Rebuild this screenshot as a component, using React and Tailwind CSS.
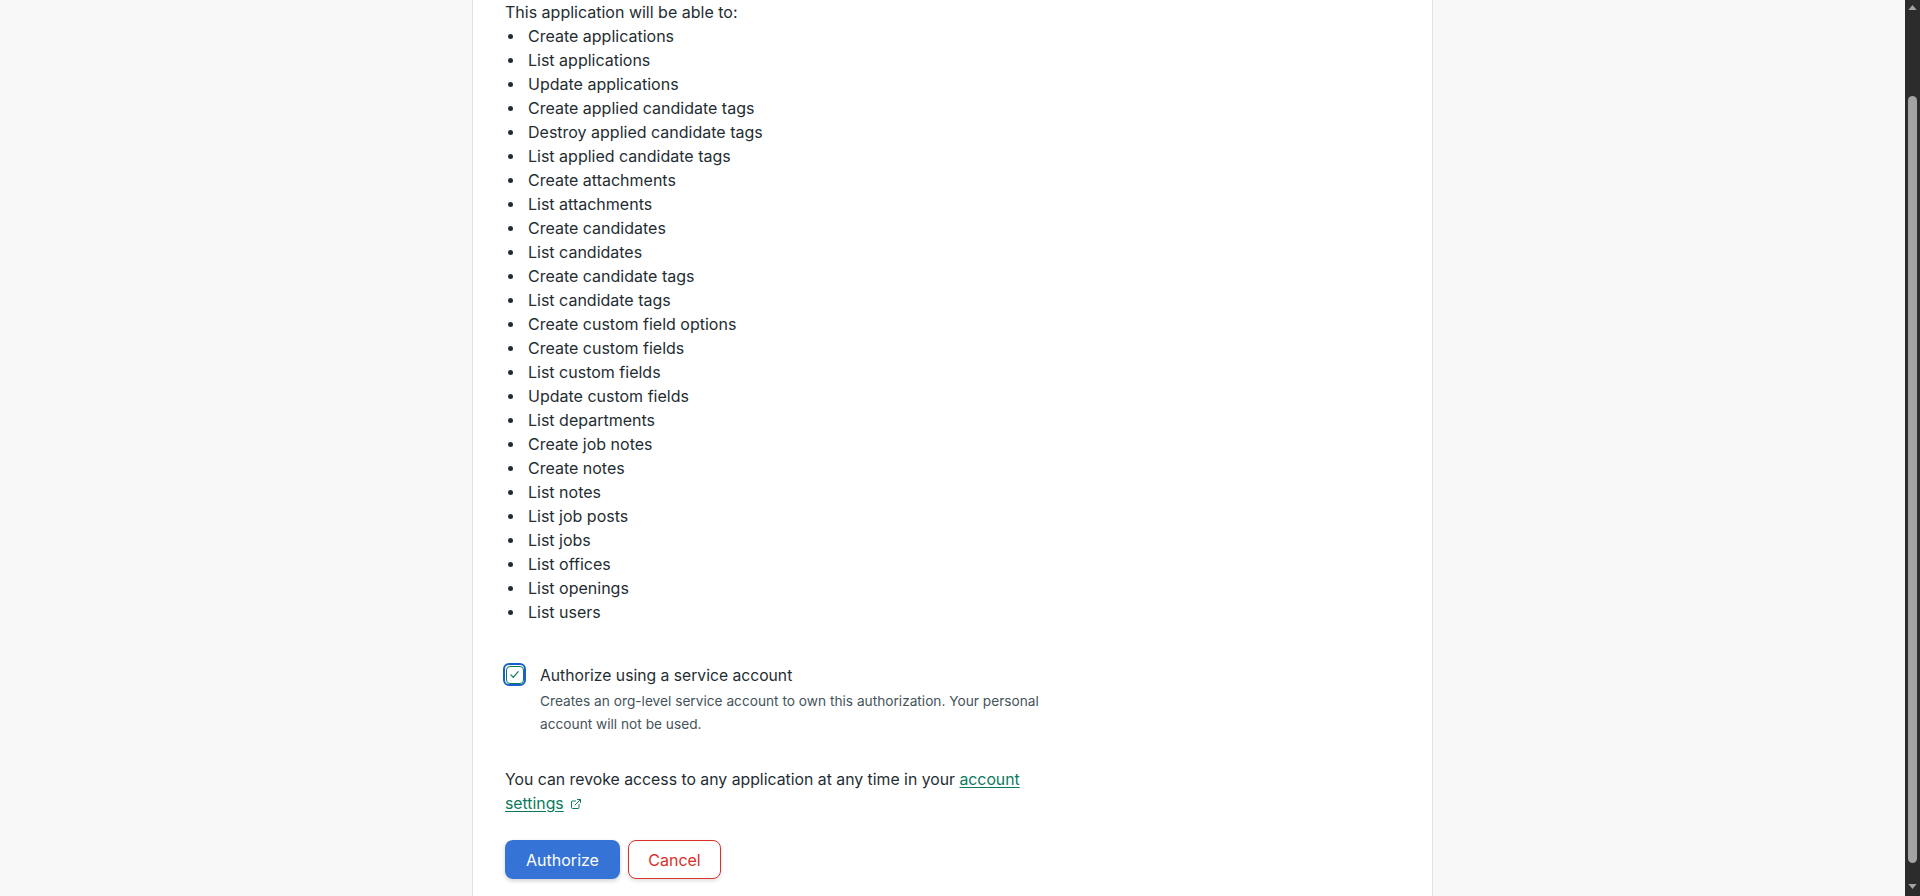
import { ExternalLink } from "lucide-react"

const scopes = [
	"Create applications",
	"List applications",
	"Update applications",
	"Create applied candidate tags",
	"Destroy applied candidate tags",
	"List applied candidate tags",
	"Create attachments",
	"List attachments",
	"Create candidates",
	"List candidates",
	"Create candidate tags",
	"List candidate tags",
	"Create custom field options",
	"Create custom fields",
	"List custom fields",
	"Update custom fields",
	"List departments",
	"Create job notes",
	"Create notes",
	"List notes",
	"List job posts",
	"List jobs",
	"List offices",
	"List openings",
	"List users",
]

const CheckBox = () => (
	<span className="flex items-center justify-center w-[23px] h-[23px] rounded-[6px] border-2 border-[#1a5fd0] shrink-0">
		<span className="flex items-center justify-center w-[18px] h-[18px] rounded-[4px] border border-[#0e7a5a] bg-white">
			<svg viewBox="0 0 16 16" className="w-[13px] h-[13px]" fill="none" stroke="#0e7a5a" strokeWidth="1.5" strokeLinecap="round" strokeLinejoin="round">
				<path d="M3.5 8.5l3 3 6-7" />
			</svg>
		</span>
	</span>
)

// the window scrollbar as it shows in the shot
const ScrollBar = () => (
	<div className="w-[15px] h-full bg-[#2c2c2c] flex flex-col items-center shrink-0">
		<svg viewBox="0 0 10 6" className="w-[9px] h-[5px] mt-[5px]" fill="#a3a3a3">
			<path d="M0 6L5 0l5 6z" />
		</svg>
		<div className="w-[9px] mt-[86px] h-[767px] rounded-full bg-[#a3a3a3]" />
		<div className="flex-1" />
		<svg viewBox="0 0 10 6" className="w-[9px] h-[5px] mb-[7px]" fill="#a3a3a3">
			<path d="M0 0l5 6 5-6z" />
		</svg>
	</div>
)

export default function App() {
	return (
		<div className="h-screen flex overflow-hidden bg-[#f8f8f8] font-['Inter',sans-serif] text-[#1f2d33]">
			<div className="flex-1 h-full">
				<div className="w-[961px] h-full mx-auto bg-white border-x border-[#e2e2e2] px-[32px]">
					<div className="text-[16px] leading-[24px]">This application will be able to:</div>
					<ul className="text-[16px] leading-[24px]">
						{scopes.map(s => (
							<li key={s} className="flex items-center">
								<span className="w-[23px] flex items-center shrink-0">
									<span className="ml-[3px] w-[5px] h-[5px] rounded-full bg-[#1f2d33]" />
								</span>
								{s}
							</li>
						))}
					</ul>

					<div className="flex items-start mt-[40px] max-w-[545px]">
						<div className="-mt-[1px] -ml-[2px]">
							<CheckBox />
						</div>
						<div className="ml-[14px]">
							<div className="text-[15.7px] leading-[24px]">Authorize using a service account</div>
							<div className="mt-[2px] text-[13.7px] leading-[23px] text-[#44545a]">
								Creates an org-level service account to own this authorization. Your personal account will not be used.
							</div>
						</div>
					</div>

					<p className="mt-[32px] text-[15.8px] leading-[24px] max-w-[545px]">
						You can revoke access to any application at any time in your{" "}
						<a href="#" className="text-[#0b7a5c] underline underline-offset-2">account settings</a>
						<ExternalLink className="inline-block w-[12px] h-[12px] ml-[6px] text-[#0b7a5c] align-[-1px]" strokeWidth={2} />
					</p>

					<div className="flex gap-[8px] mt-[24px]">
						<button className="h-[39px] w-[115px] rounded-[8px] bg-[#3574d6] text-white text-[16px] shadow-[0_2px_4px_rgba(0,0,0,0.18)]">
							Authorize
						</button>
						<button className="h-[39px] w-[93px] rounded-[8px] bg-white border border-[#d9302a] text-[#d9302a] text-[16px] shadow-[0_2px_4px_rgba(0,0,0,0.12)]">
							Cancel
						</button>
					</div>
				</div>
			</div>
			<ScrollBar />
		</div>
	)
}
